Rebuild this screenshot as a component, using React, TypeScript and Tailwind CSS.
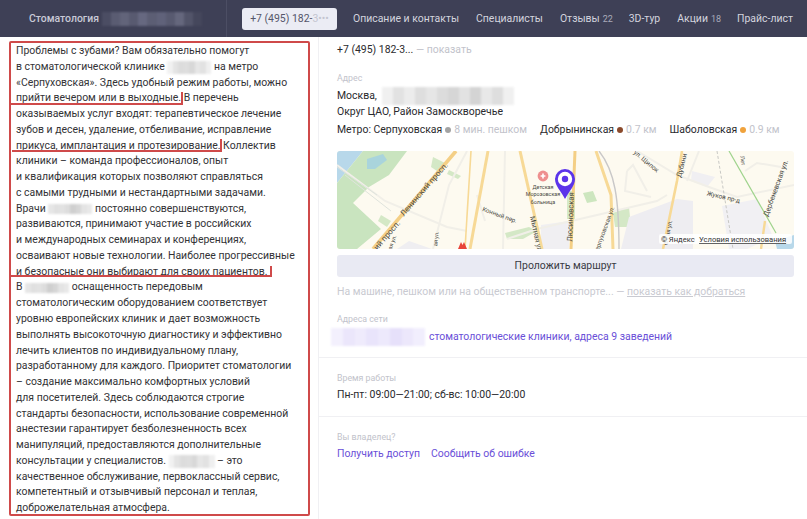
import React from 'react';

function Blur({ cells, className }: { cells: string[]; className: string }) {
  return (
    <span className={`inline-flex align-middle blur-[1px] ${className}`}>
      {cells.map((c, i) => (
        <span key={i} className={`flex-1 h-full ${c}`} />
      ))}
    </span>
  );
}

const grayA = ['bg-[#f1f1f1]', 'bg-[#e4e4e4]', 'bg-[#dcdcdc]', 'bg-[#dedede]', 'bg-[#d8d8d8]', 'bg-[#e6e6e6]', 'bg-[#e2e2e2]', 'bg-[#efefef]'];
const grayB = ['bg-[#e6e6e6]', 'bg-[#e0e0e0]', 'bg-[#e2e2e2]', 'bg-[#dddddd]', 'bg-[#cfcfcf]', 'bg-[#d6d6d6]', 'bg-[#e4e4e4]', 'bg-[#e8e8e8]'];
const headerCells = ['bg-[#4b4d63]', 'bg-[#5a5c72]', 'bg-[#62647a]', 'bg-[#585a70]', 'bg-[#666880]', 'bg-[#5c5e74]', 'bg-[#60627a]', 'bg-[#585a70]', 'bg-[#65677d]', 'bg-[#525469]', 'bg-[#45475c]'];
const addrCells = ['bg-[#f0f0f0]', 'bg-[#e2e2e2]', 'bg-[#ececec]', 'bg-[#dedede]', 'bg-[#e6e6e6]', 'bg-[#dcdcdc]', 'bg-[#d6d6d6]', 'bg-[#e2e2e2]', 'bg-[#d4d4d4]', 'bg-[#e8e8e8]', 'bg-[#dedede]', 'bg-[#f0f0f0]'];
const linkCells = ['bg-[#f3f0fd]', 'bg-[#ebe6fb]', 'bg-[#efebfc]', 'bg-[#e9e4fb]', 'bg-[#ede9fc]', 'bg-[#e6e0fa]', 'bg-[#ece7fb]', 'bg-[#f1eefd]'];

function Label({ children }: { children: React.ReactNode }) {
  return <div className="text-[8.8px] leading-[14px] text-[#c2c3cb]">{children}</div>;
}

function Nav({ label, count, className }: { label: string; count?: number; className: string }) {
  return (
    <span className={`text-[#d3d4de] ${className}`}>
      {label}
      {count !== undefined && <span className="ml-[3px] text-[9px] text-[#a9abba]">{count}</span>}
    </span>
  );
}

function MapLabel({ x, y, r = 0, size = 5.4, children }: { x: number; y: number; r?: number; size?: number; children: string }) {
  return (
    <text x={x} y={y} fontSize={size} fill="#4a4a44" textAnchor="middle" transform={`rotate(${r} ${x} ${y})`}>
      {children}
    </text>
  );
}

function MapView() {
  return (
    <svg viewBox="0 0 457 98" className="w-full h-full block" style={{ fontFamily: 'Roboto, sans-serif' }}>
      <rect width="457" height="98" fill="#fdfaf0" />
      {/* park and water */}
      <path d="M0 0H26L0 32Z" fill="#b8d8ea" />
      <path d="M26 0H70L52 24 32 36 16 52 44 78 20 98H0V32Z" fill="#c9e4bf" />
      <path d="M30 8 46 3 50 9 38 18 30 18Z" fill="#a9d4dc" />
      <path d="M96 6 108 12 100 20 94 16Z" fill="#d4e8c6" />
      <path d="M112 19 124 25 121 28 110 23Z" fill="#d4e8c6" />
      <path d="M44 64 54 70 50 76 41 70Z" fill="#d4e8c6" />
      <path d="M246 42 256 40 260 50 250 52Z" fill="#cde6bf" />
      <path d="M230 40H238V68H230Z" fill="#d6eac8" />
      <path d="M168 82 192 76 200 80 186 88 170 88Z" fill="#d4e8c6" />
      <path d="M276 62 292 56 294 76 278 76Z" fill="#d4e8c6" />
      {/* built up grey */}
      <path d="M204 74 232 70V98H204Z" fill="#f0eff2" />
      <path d="M292 66 340 48 356 50V98H284Z" fill="#eeedf1" />
      <path d="M355 20 378 26 370 36 354 30Z" fill="#f0eff2" />
      <path d="M385 55 420 48 436 86 410 98H392Z" fill="#f1f0f3" />
      <path d="M60 98 72 90 95 98Z" fill="#efeef1" />
      <path d="M438 90 457 84V98H440Z" fill="#b8d8ea" />
      {/* minor roads */}
      <g stroke="#f1efe8" strokeWidth="2" fill="none">
        <path d="M0 14 48 50 110 76 130 80" />
        <path d="M130 0 112 34 96 98" />
        <path d="M168 0 166 98" />
        <path d="M200 78 320 50 330 44" />
        <path d="M170 88 200 78" />
        <path d="M290 20 288 40 314 46M290 20 296 14 310 40" />
        <path d="M300 0 340 24 372 36 400 46 457 34" />
        <path d="M362 0 350 30" />
        <path d="M408 20 420 12 444 16" />
        <path d="M140 44 148 70" />
      </g>
      <path d="M0 16 40 44M8 24 54 60" stroke="#dfe3dc" strokeWidth="1" fill="none" />
      <path d="M262 0C278 20 282 48 282 98" stroke="#c9c8c8" strokeWidth="1.4" fill="none" />
      <path d="M380 0 396 98" stroke="#c8c8c4" strokeWidth="1" strokeDasharray="3 2" fill="none" />
      {/* main roads */}
      <g stroke="#f7d996" fill="none" strokeLinecap="butt">
        <path d="M119 0 36 98" strokeWidth="3.6" stroke="#f4cf85" />
        <path d="M134 0 128 98" strokeWidth="1.6" />
        <path d="M151 0 133 98" strokeWidth="3" />
        <path d="M183 0 205 98" strokeWidth="3" />
        <path d="M238 0 234 98" strokeWidth="3" stroke="#f4cf85" />
        <path d="M259 0 274 44 276 98" strokeWidth="3" />
        <path d="M345 0 340 30 326 98" strokeWidth="2.6" />
        <path d="M428 70 424 98" strokeWidth="2.4" />
      </g>
      <path d="M392 0 439 82" stroke="#9fd38c" strokeWidth="1.2" fill="none" />
      {/* labels */}
      <MapLabel x={89} y={40} r={-49} size={8}>Ленинский просп.</MapLabel>
      <MapLabel x={52} y={86} r={-49} size={8}>ий просп.</MapLabel>
      <MapLabel x={57} y={92} r={-70} size={5.6}>ая ул.</MapLabel>
      <MapLabel x={101} y={88} r={-85} size={5.6}>ая ул.</MapLabel>
      <MapLabel x={162} y={66} r={20} size={6.2}>Конный пер.</MapLabel>
      <MapLabel x={197} y={84} r={78} size={7}>Мытная ул.</MapLabel>
      <MapLabel x={236} y={66} r={-88} size={7.6}>Люсиновская</MapLabel>
      <MapLabel x={269} y={80} r={-70} size={6.2}>Серпуховская ул.</MapLabel>
      <MapLabel x={333} y={82} r={-80} size={6}>Фя ая ул.</MapLabel>
      <MapLabel x={347} y={15} r={-75} size={7}>Дубини</MapLabel>
      <MapLabel x={308} y={12} r={40} size={6.4}>ул. Щипок</MapLabel>
      <MapLabel x={386} y={48} r={13} size={6.4}>Жуков пр-д</MapLabel>
      <MapLabel x={441} y={38} r={-70} size={7.2}>Дербеневская ул.</MapLabel>
      <MapLabel x={404} y={10} r={80} size={5.6}>Лет</MapLabel>
      <MapLabel x={206} y={37.5}>Детская</MapLabel>
      <MapLabel x={206} y={45}>Морозовская</MapLabel>
      <MapLabel x={206} y={52.5}>больница</MapLabel>
      {/* hospital */}
      <circle cx="206" cy="25" r="5.4" fill="#ee8f8f" />
      <path d="M206 22.6V27.4M203.6 25H208.4" stroke="#fff" strokeWidth="1.6" />
      {/* metro */}
      <path d="M121 98 124 91 125.5 94 127 91 130 98Z" fill="#e8443a" />
      {/* pin */}
      <path d="M228 48C224 40 218 35 218 28A10 10 0 0 1 238 28C238 35 232 40 228 48Z" fill="#5b34ea" />
      <circle cx="228" cy="28" r="7.2" fill="#fff" />
      <circle cx="228" cy="28" r="3.2" fill="#5b34ea" />
      {/* copyright */}
      <rect x="322" y="83" width="133" height="10" rx="2" fill="#fff" opacity="0.85" />
      <text x="324" y="91" fontSize="7.6" fill="#333">© Яндекс</text>
      <text x="362" y="91" fontSize="7.6" fill="#333" textDecoration="underline">Условия использования</text>
    </svg>
  );
}

export default function App() {
  return (
    <div className="w-[807px] h-[519px] overflow-hidden bg-white font-['Roboto',sans-serif] text-[#2a2a2e]">
      <header className="flex h-[37px] items-center bg-[#3e4056] text-[10.45px]">
        <div className="flex h-full w-[227px] shrink-0 items-center border-r border-[#4c4e64] pl-[29px] font-medium text-[#c9cad6]">
          Стоматология
          <Blur cells={headerCells} className="ml-[3px] h-[14px] w-[100px]" />
        </div>
        <div className="ml-[15px] flex h-[22px] w-[95px] items-center justify-center rounded-[3px] bg-[#ebecf4] text-[#55566a] whitespace-nowrap">
          +7 (495) 182-<span className="text-[#c4c5d0]">3•••</span>
        </div>
        <nav className="flex whitespace-nowrap">
          <Nav label="Описание и контакты" className="ml-[16px]" />
          <Nav label="Специалисты" className="ml-[17px]" />
          <Nav label="Отзывы" count={22} className="ml-[17px]" />
          <Nav label="3D-тур" className="ml-[16px]" />
          <Nav label="Акции" count={18} className="ml-[17px]" />
          <Nav label="Прайс-лист" className="ml-[16px]" />
        </nav>
      </header>

      <div className="flex">
        <section className="w-[319px] h-[482px] shrink-0 border-r border-[#f0f0f3] pt-[4px] pl-[9px]">
          <div className="relative h-[475px] w-[301px] rounded-[2px] border-2 border-[#cf4a4a] pl-[5px] text-[10.45px] leading-[15.76px] whitespace-nowrap text-[#333336]">
            <div>Проблемы с зубами? Вам обязательно помогут</div>
            <div>в стоматологической клинике <Blur cells={grayA} className="h-[13px] w-[44px]" /> на метро</div>
            <div>«Серпуховская». Здесь удобный режим работы, можно</div>
            <div>прийти вечером или в выходные. В перечень</div>
            <div>оказываемых услуг входят: терапевтическое лечение</div>
            <div>зубов и десен, удаление, отбеливание, исправление</div>
            <div>прикуса, имплантация и протезирование. Коллектив</div>
            <div>клиники – команда профессионалов, опыт</div>
            <div>и квалификация которых позволяют справляться</div>
            <div>с самыми трудными и нестандартными задачами.</div>
            <div>Врачи <Blur cells={grayB} className="h-[10px] w-[44px]" /> постоянно совершенствуются,</div>
            <div>развиваются, принимают участие в российских</div>
            <div>и международных семинарах и конференциях,</div>
            <div>осваивают новые технологии. Наиболее прогрессивные</div>
            <div>и безопасные они выбирают для своих пациентов.</div>
            <div>В <Blur cells={grayB} className="h-[10px] w-[44px]" /> оснащенность передовым</div>
            <div>стоматологическим оборудованием соответствует</div>
            <div>уровню европейских клиник и дает возможность</div>
            <div>выполнять высокоточную диагностику и эффективно</div>
            <div>лечить клиентов по индивидуальному плану,</div>
            <div>разработанному для каждого. Приоритет стоматологии</div>
            <div>– создание максимально комфортных условий</div>
            <div>для посетителей. Здесь соблюдаются строгие</div>
            <div>стандарты безопасности, использование современной</div>
            <div>анестезии гарантирует безболезненность всех</div>
            <div>манипуляций, предоставляются дополнительные</div>
            <div>консультации у специалистов. <Blur cells={grayA} className="h-[13px] w-[46px]" /> – это</div>
            <div>качественное обслуживание, первоклассный сервис,</div>
            <div>компетентный и отзывчивый персонал и теплая,</div>
            <div>доброжелательная атмосфера.</div>

            {/* red marks */}
            <span className="absolute left-[-1px] top-[60px] h-[2px] w-[172px] bg-[#cf4a4a]" />
            <span className="absolute left-[170px] top-[49px] h-[13px] w-[2px] bg-[#cf4a4a]" />
            <span className="absolute left-[1px] top-[107px] h-[2px] w-[210px] bg-[#cf4a4a]" />
            <span className="absolute left-[209px] top-[96px] h-[13px] w-[2px] bg-[#cf4a4a]" />
            <span className="absolute left-[-1px] top-[232px] h-[2px] w-[261px] bg-[#cf4a4a]" />
            <span className="absolute left-[259px] top-[223px] h-[11px] w-[2px] bg-[#cf4a4a]" />
          </div>
        </section>

        <main className="w-[488px] text-[10.45px] leading-[16px] text-[#2a2a2e]">
          <div className="pl-[18px] pr-[13px] pt-[5px]">
            <div>
              +7 (495) 182-3... <span className="text-[#c2c3cb]">— показать</span>
            </div>
            <div className="mt-[13px]"><Label>Адрес</Label></div>
            <div className="mt-[3px]">
              Москва, <Blur cells={addrCells} className="-my-[2px] ml-[3px] h-[18px] w-[131px]" />
            </div>
            <div>Округ ЦАО, Район Замоскворечье</div>
            <div className="mt-[2px] flex whitespace-nowrap">
              <span>Метро: Серпуховская</span>
              <span className="ml-[3px] mt-[5px] h-[6px] w-[6px] rounded-full bg-[#a3a3a3]" />
              <span className="ml-[3px] text-[#c2c3cb]">8 мин. пешком</span>
              <span className="ml-[13px]">Добрынинская</span>
              <span className="ml-[3px] mt-[5px] h-[6px] w-[6px] rounded-full bg-[#8b4a2b]" />
              <span className="ml-[3px] text-[#c2c3cb]">0.7 км</span>
              <span className="ml-[13px]">Шаболовская</span>
              <span className="ml-[3px] mt-[5px] h-[6px] w-[6px] rounded-full bg-[#f0a23c]" />
              <span className="ml-[3px] text-[#c2c3cb]">0.9 км</span>
            </div>
            <div className="mt-[13px] h-[98px] overflow-hidden rounded-[3px]">
              <MapView />
            </div>
            <button className="mt-[6px] block h-[22px] w-full rounded-[3px] bg-[#e9eaf3] text-center text-[10.45px] text-[#3a3b44]">
              Проложить маршрут
            </button>
            <div className="mt-[7px] text-[#c9cad1]">
              На машине, пешком или на общественном транспорте... — <span className="underline">показать как добраться</span>
            </div>
            <div className="mt-[12px]"><Label>Адреса сети</Label></div>
            <div className="mt-[2px] -ml-[6px] flex items-center text-[#6a4fd8]">
              <Blur cells={linkCells} className="h-[18px] w-[94px] mr-[4px]" />
              стоматологические клиники, адреса 9 заведений
            </div>
          </div>
          <div className="mt-[11px] border-t border-[#f0f0f3] pl-[18px] pt-[13px] pb-[13px]">
            <Label>Время работы</Label>
            <div className="mt-[2px]">Пн-пт: 09:00—21:00; сб-вс: 10:00—20:00</div>
          </div>
          <div className="border-t border-[#f0f0f3] pl-[18px] pt-[13px]">
            <Label>Вы владелец?</Label>
            <div className="mt-[2px] flex gap-[11px] text-[#6a4fd8]">
              <span>Получить доступ</span>
              <span>Сообщить об ошибке</span>
            </div>
          </div>
        </main>
      </div>
    </div>
  );
}
